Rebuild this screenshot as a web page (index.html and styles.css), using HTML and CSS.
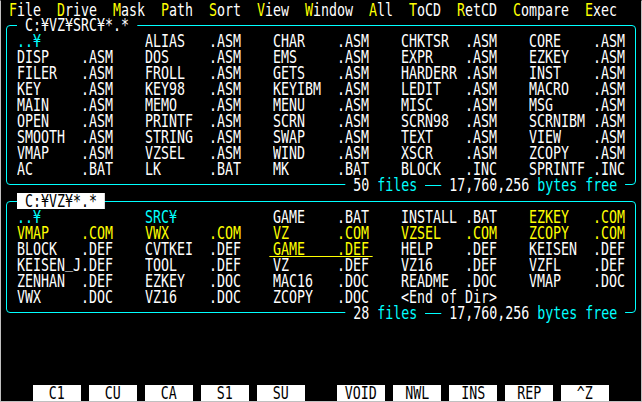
FILE: index.html
```html
<!DOCTYPE html>
<html>
<head>
<meta charset="utf-8">
<link rel="stylesheet" href="styles.css">
</head>
<body>
<div class="screen">
  <div class="menu"><span class="t"> <b>F</b>ile  <b>D</b>rive  <b>M</b>ask  <b>P</b>ath  <b>S</b>ort  <b>V</b>iew  <b>W</b>indow  <b>A</b>ll  <b>T</b>oCD  <b>R</b>etCD  <b>C</b>ompare  <b>E</b>xec</span></div>

  <div class="box">
    <div class="ttl"><span class="lbl"> C:¥VZ¥SRC¥*.* </span></div>
    <div class="files">
      <div class="f dir">..¥</div><div class="f"><span class="n">ALIAS</span>.ASM</div><div class="f"><span class="n">CHAR</span>.ASM</div><div class="f"><span class="n">CHKTSR</span>.ASM</div><div class="f"><span class="n">CORE</span>.ASM</div>
      <div class="f"><span class="n">DISP</span>.ASM</div><div class="f"><span class="n">DOS</span>.ASM</div><div class="f"><span class="n">EMS</span>.ASM</div><div class="f"><span class="n">EXPR</span>.ASM</div><div class="f"><span class="n">EZKEY</span>.ASM</div>
      <div class="f"><span class="n">FILER</span>.ASM</div><div class="f"><span class="n">FROLL</span>.ASM</div><div class="f"><span class="n">GETS</span>.ASM</div><div class="f"><span class="n">HARDERR</span>.ASM</div><div class="f"><span class="n">INST</span>.ASM</div>
      <div class="f"><span class="n">KEY</span>.ASM</div><div class="f"><span class="n">KEY98</span>.ASM</div><div class="f"><span class="n">KEYIBM</span>.ASM</div><div class="f"><span class="n">LEDIT</span>.ASM</div><div class="f"><span class="n">MACRO</span>.ASM</div>
      <div class="f"><span class="n">MAIN</span>.ASM</div><div class="f"><span class="n">MEMO</span>.ASM</div><div class="f"><span class="n">MENU</span>.ASM</div><div class="f"><span class="n">MISC</span>.ASM</div><div class="f"><span class="n">MSG</span>.ASM</div>
      <div class="f"><span class="n">OPEN</span>.ASM</div><div class="f"><span class="n">PRINTF</span>.ASM</div><div class="f"><span class="n">SCRN</span>.ASM</div><div class="f"><span class="n">SCRN98</span>.ASM</div><div class="f"><span class="n">SCRNIBM</span>.ASM</div>
      <div class="f"><span class="n">SMOOTH</span>.ASM</div><div class="f"><span class="n">STRING</span>.ASM</div><div class="f"><span class="n">SWAP</span>.ASM</div><div class="f"><span class="n">TEXT</span>.ASM</div><div class="f"><span class="n">VIEW</span>.ASM</div>
      <div class="f"><span class="n">VMAP</span>.ASM</div><div class="f"><span class="n">VZSEL</span>.ASM</div><div class="f"><span class="n">WIND</span>.ASM</div><div class="f"><span class="n">XSCR</span>.ASM</div><div class="f"><span class="n">ZCOPY</span>.ASM</div>
      <div class="f"><span class="n">AC</span>.BAT</div><div class="f"><span class="n">LK</span>.BAT</div><div class="f"><span class="n">MK</span>.BAT</div><div class="f"><span class="n">BLOCK</span>.INC</div><div class="f"><span class="n">SPRINTF</span>.INC</div>
    </div>
    <div class="ft"><span class="lbl"> <i>50</i> files <span class="dash"></span> <i>17,760,256</i> bytes free </span></div>
  </div>

  <div class="box">
    <div class="ttl"><span class="lbl inv"> C:¥VZ¥*.* </span></div>
    <div class="files">
      <div class="f dir">..¥</div><div class="f dir">SRC¥</div><div class="f"><span class="n">GAME</span>.BAT</div><div class="f"><span class="n">INSTALL</span>.BAT</div><div class="f exe"><span class="n">EZKEY</span>.COM</div>
      <div class="f exe"><span class="n">VMAP</span>.COM</div><div class="f exe"><span class="n">VWX</span>.COM</div><div class="f exe"><span class="n">VZ</span>.COM</div><div class="f exe"><span class="n">VZSEL</span>.COM</div><div class="f exe"><span class="n">ZCOPY</span>.COM</div>
      <div class="f"><span class="n">BLOCK</span>.DEF</div><div class="f"><span class="n">CVTKEI</span>.DEF</div><div class="f exe cur"><span class="n">GAME</span>.DEF</div><div class="f"><span class="n">HELP</span>.DEF</div><div class="f"><span class="n">KEISEN</span>.DEF</div>
      <div class="f"><span class="n">KEISEN<span class="us">_</span>J</span>.DEF</div><div class="f"><span class="n">TOOL</span>.DEF</div><div class="f"><span class="n">VZ</span>.DEF</div><div class="f"><span class="n">VZ16</span>.DEF</div><div class="f"><span class="n">VZFL</span>.DEF</div>
      <div class="f"><span class="n">ZENHAN</span>.DEF</div><div class="f"><span class="n">EZKEY</span>.DOC</div><div class="f"><span class="n">MAC16</span>.DOC</div><div class="f"><span class="n">README</span>.DOC</div><div class="f"><span class="n">VMAP</span>.DOC</div>
      <div class="f"><span class="n">VWX</span>.DOC</div><div class="f"><span class="n">VZ16</span>.DOC</div><div class="f"><span class="n">ZCOPY</span>.DOC</div><div class="f">&lt;End of Dir&gt;</div>
    </div>
    <div class="ft"><span class="lbl"> <i>28</i> files <span class="dash"></span> <i>17,760,256</i> bytes free </span></div>
  </div>

  <div class="fkeys">
    <div class="grp">
      <div class="key"><span class="k">C1</span></div>
      <div class="key"><span class="k">CU</span></div>
      <div class="key"><span class="k">CA</span></div>
      <div class="key"><span class="k">S1</span></div>
      <div class="key"><span class="k">SU</span></div>
    </div>
    <div class="grp">
      <div class="key"><span class="k">VOID</span></div>
      <div class="key"><span class="k">NWL</span></div>
      <div class="key"><span class="k">INS</span></div>
      <div class="key"><span class="k">REP</span></div>
      <div class="key"><span class="k">^Z</span></div>
    </div>
  </div>
</div>
</body>
</html>
```

FILE: styles.css
```css
html, body {
  margin: 0;
  padding: 0;
  background: #000;
}

.screen {
  width: 640px;
  height: 400px;
  border: 1px solid #c0c0c0;
  border-top-color: #000;
  background: #000;
  color: #fff;
  font-family: "DejaVu Sans Mono", monospace;
  font-size: 18px;
  line-height: 16px;
  display: flex;
  flex-direction: column;
  overflow: hidden;
}

/* narrow 8x16 text cells */
.t, .lbl, .f, .k {
  white-space: pre;
  transform: scaleX(0.7382);
  transform-origin: 0 0;
}

.t, .lbl {
  display: inline-block;
  height: 16px;
}

.menu {
  height: 15px;
  padding-top: 1px;
}

.menu b {
  font-weight: normal;
  color: #ffff00;
}

.box {
  margin: 8px 5px 8px 5px;
  border: 1px solid #00ffff;
  border-radius: 4px;
}

.ttl {
  height: 16px;
  margin-top: -9px;
  padding-left: 10px;
}

.lbl {
  background: #000;
}

.lbl.inv {
  background: #fff;
  color: #000;
}

.files {
  display: grid;
  grid-template-columns: repeat(5, 128px);
  grid-auto-rows: 16px;
  padding-left: 10px;
}

.f {
  position: relative;
}

.n {
  display: inline-block;
  width: 8ch;
}

.us {
  display: inline-block;
  transform: translateY(-3px);
}

.dir {
  color: #00ffff;
}

.exe {
  color: #ffff00;
}

.cur::after {
  content: "";
  position: absolute;
  left: -0.5ch;
  bottom: 0;
  width: 13ch;
  height: 1px;
  background: #ffff00;
}

.ft {
  height: 16px;
  margin-bottom: -9px;
  padding-right: 10px;
  display: flex;
  justify-content: flex-end;
}

.ft .lbl {
  transform-origin: 100% 0;
  color: #00ffff;
}

.ft i {
  font-style: normal;
  color: #fff;
}

.dash {
  display: inline-block;
  width: 2ch;
  height: 1px;
  background: #00ffff;
  vertical-align: 5px;
}

.fkeys {
  margin-top: auto;
  height: 16px;
  display: flex;
  gap: 32px;
  padding-left: 32px;
}

.grp {
  display: flex;
  gap: 8px;
}

.key {
  width: 48px;
  height: 16px;
  background: #fff;
  color: #000;
  display: flex;
  justify-content: center;
}

.k {
  display: block;
  transform-origin: 50% 0;
}
```
